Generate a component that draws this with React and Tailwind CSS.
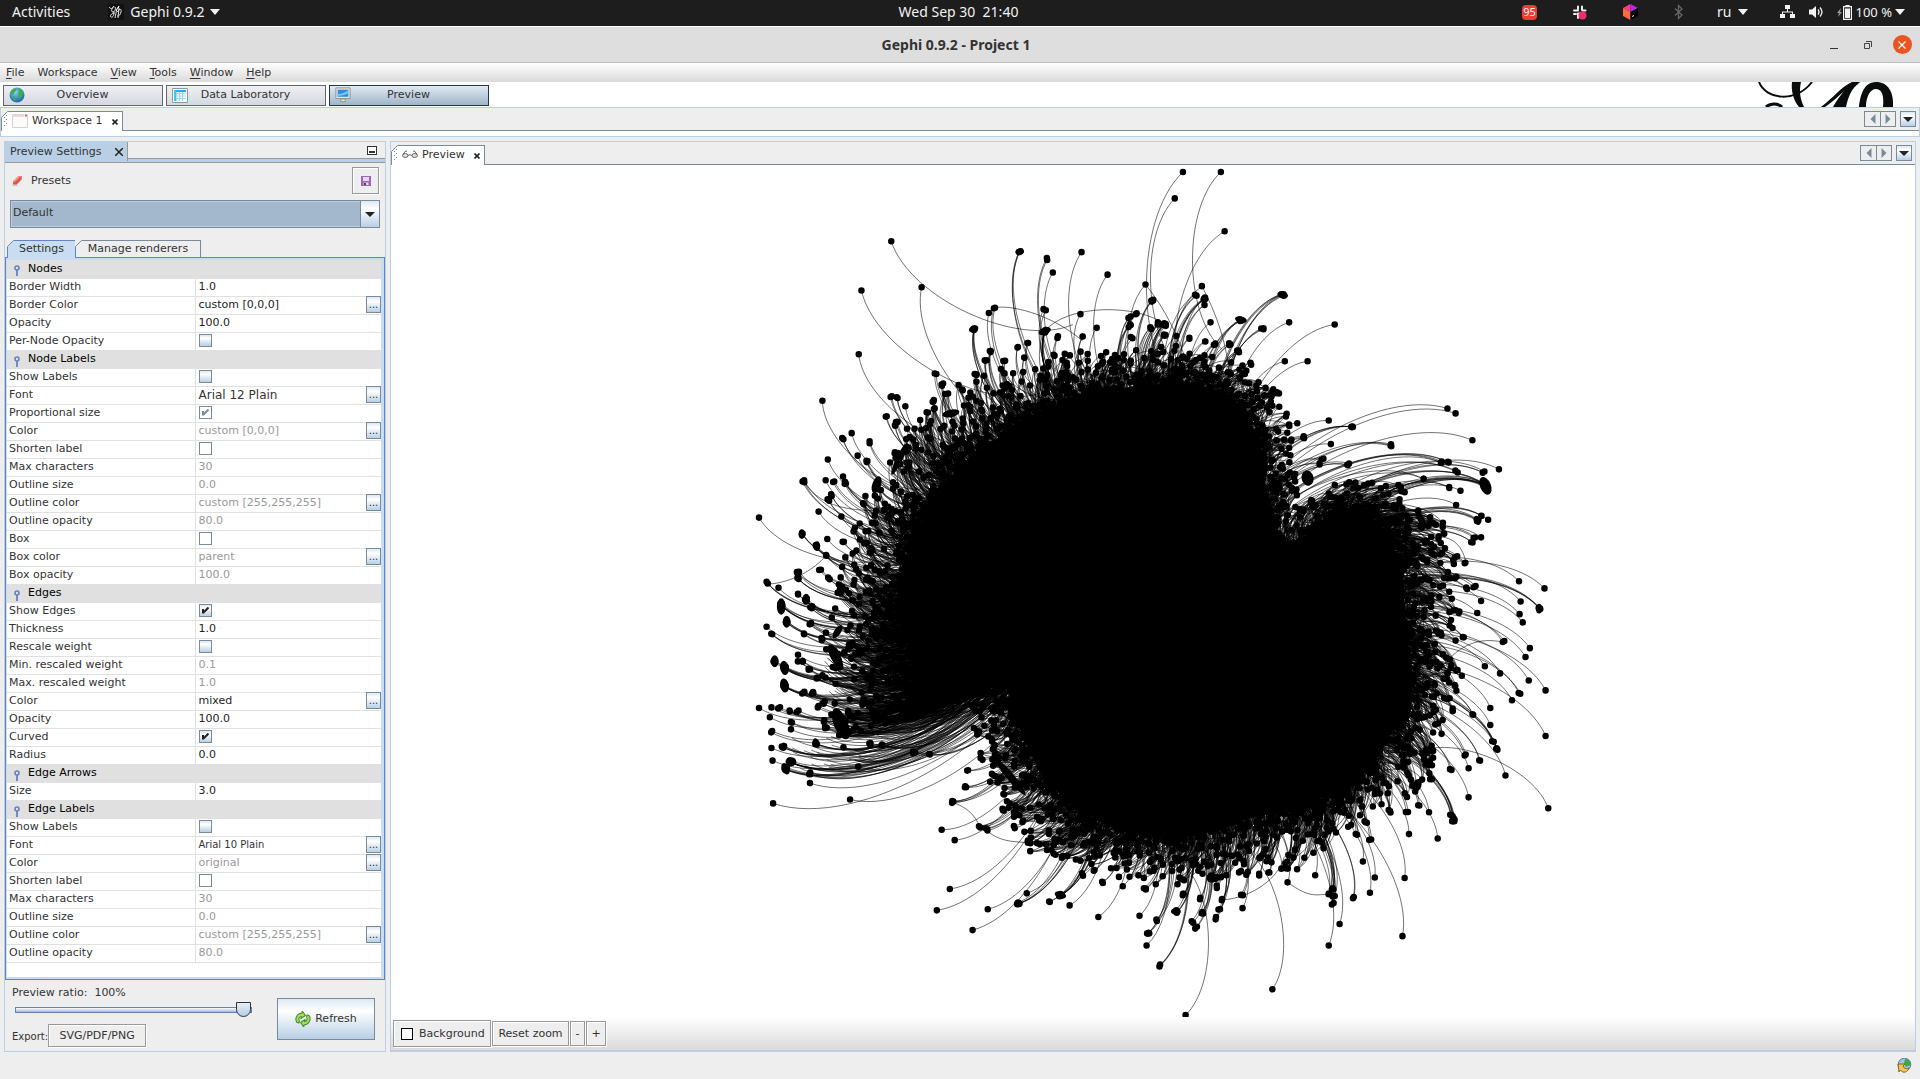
import React from "react";

/* ---------- graph drawing ---------- */

const CENTER = [800, 780];

// Matching outlines: the solid core and the loose rim around it.
const RINGS = [
  [565, 475, 500, 415], [478, 537, 415, 460], [412, 605, 340, 555], [358, 692, 280, 655],
  [342, 780, 250, 760], [348, 855, 235, 870], [380, 900, 240, 960], [410, 918, 275, 1015],
  [445, 925, 360, 995], [495, 935, 470, 965], [535, 965, 485, 1010], [560, 1040, 505, 1090],
  [595, 1115, 545, 1165], [645, 1170, 590, 1235], [720, 1205, 690, 1262], [800, 1230, 800, 1295],
  [880, 1225, 890, 1300], [960, 1200, 970, 1278], [1050, 1175, 1060, 1262], [1140, 1140, 1160, 1205],
  [1205, 1085, 1270, 1130], [1245, 1020, 1310, 1050], [1265, 930, 1340, 945], [1262, 850, 1330, 850],
  [1250, 760, 1325, 760], [1230, 690, 1315, 670], [1185, 655, 1240, 610], [1130, 660, 1150, 605],
  [1070, 700, 1070, 640], [1025, 700, 1050, 620], [1000, 600, 1045, 550], [990, 520, 1030, 480],
  [965, 455, 1000, 420], [912, 425, 940, 375], [850, 418, 860, 362], [760, 418, 750, 358],
  [660, 436, 635, 378],
];

// Outlying nodes: x, y, number of edges, and for long edges the far end
const OUTLIERS = [
  [853, 22, 1, 860, 450], [838, 70, 1, 855, 390], [923, 22, 1, 925, 345], [930, 130, 1, 862, 430], [315, 148, 1, 650, 300],
  [260, 238, 1, 590, 425], [371, 232, 1, 560, 500], [552, 167, 3], [604, 181, 2], [613, 205],
  [666, 168], [714, 209], [784, 227], [888, 230], [797, 256, 3], [876, 246, 3], [892, 252, 6], [892, 266, 2], [1037, 246, 6], [960, 291, 5],
  [1000, 309, 3], [1049, 296], [1133, 300], [1041, 367], [1083, 367], [255, 354, 1, 480, 520], [188, 439, 1, 370, 600], [504, 270, 2], [495, 279], [467, 308, 5],
  [598, 272, 2], [600, 312, 8], [664, 281], [622, 323, 2], [694, 306], [549, 341, 2], [567, 332, 2], [497, 348, 4], [489, 364, 3], [668, 323, 2],
  [559, 362, 2], [615, 355, 2], [523, 368, 2], [470, 391, 4], [396, 389, 2], [409, 410, 3], [445, 419, 2], [393, 440, 4], [316, 433, 2], [327, 433, 2],
  [341, 449], [305, 467, 2], [325, 477, 2], [321, 485, 2], [344, 490], [242, 498], [226, 507, 2], [277, 514, 2], [253, 539], [271, 549, 3],
  [198, 546], [153, 586, 3], [194, 584], [209, 588, 2], [229, 588, 4], [226, 577], [203, 611, 2], [199, 620, 2], [181, 641], [223, 650],
  [71, 652, 1, 350, 710], [150, 682, 3], [178, 704, 3], [197, 691], [194, 722, 2], [227, 695, 2], [143, 752, 3], [143, 763, 3], [183, 747, 2], [200, 763, 2],
  [85, 769], [87, 773, 2], [107, 780], [141, 791, 2], [158, 801, 4], [112, 810, 7], [168, 815, 4], [122, 842, 5], [165, 846, 4], [85, 851],
  [94, 865, 3], [153, 863, 2], [187, 874, 3], [143, 902], [141, 914, 2], [154, 914, 2], [100, 914, 3], [118, 925, 7], [118, 958, 7], [164, 930, 3],
  [178, 946, 3], [153, 971, 3], [170, 971, 3], [71, 999], [94, 998], [109, 998, 2], [126, 1005, 2], [142, 1005, 2], [91, 1016], [131, 1024, 2],
  [130, 1038], [95, 1042, 2], [94, 1072], [115, 1071, 5], [177, 1063, 4], [96, 1095], [130, 1097, 8], [121, 1110, 6], [163, 1118, 3], [165, 1136],
  [97, 1173], [239, 1166], [254, 1106], [228, 1071, 2], [277, 1065, 3], [297, 1066, 3], [357, 1080, 3], [384, 1083, 2], [180, 997, 2], [190, 989, 3],
  [192, 1022, 3], [195, 1034, 3], [408, 1221], [432, 1240], [428, 1171, 4], [478, 1215, 3], [490, 1221, 3], [456, 1113, 2], [452, 1143, 3], [423, 1329],
  [399, 1368], [493, 1366], [465, 1404], [549, 1356, 5], [565, 1337], [627, 1340, 7], [608, 1353, 2], [644, 1359], [697, 1380], [705, 1317, 2],
  [735, 1307], [742, 1324], [689, 1297, 2], [667, 1303, 2], [773, 1378], [803, 1387, 2], [789, 1410, 3], [786, 1432], [810, 1468, 3], [858, 1559, 1, 850, 1280],
  [783, 1330, 3], [840, 1370, 4], [871, 1389, 2], [877, 1399, 2], [888, 1372, 3], [852, 1338, 3], [883, 1346, 2], [914, 1382, 2], [919, 1366, 2], [927, 1348, 2],
  [963, 1364], [962, 1338, 2], [958, 1297, 2], [914, 1325, 2], [904, 1309, 4], [995, 1302, 2], [1010, 1300, 2], [1046, 1317], [1018, 1512, 1, 960, 1250], [1097, 1304],
  [1122, 1339, 3], [1128, 1330, 3], [1131, 1344, 2], [1129, 1357, 2], [1122, 1432], [1142, 1393], [1168, 1345, 2], [1198, 1336], [1207, 1308], [1185, 1279],
  [1258, 1415], [1262, 1309], [1270, 1229], [1323, 1237], [1352, 1205, 5], [1348, 1196, 3], [1307, 1189], [1199, 1240, 2], [1172, 1228, 2], [1190, 1207, 3],
  [1236, 1188, 2], [1266, 1187, 2], [1287, 1177, 2], [1380, 1162], [1380, 1109], [1348, 1112, 2], [1375, 1084, 2], [1399, 1094, 2], [1432, 1075, 4], [1425, 1061, 2],
  [1448, 1122], [1527, 1182, 1, 1285, 1080], [1522, 1050], [1420, 1030], [1387, 1009, 2], [1420, 999], [1460, 985], [1473, 974, 2], [1522, 967], [1491, 949],
  [1438, 936], [1410, 923], [1444, 879, 2], [1485, 906], [1493, 890], [1369, 872, 2], [1480, 843], [1474, 828], [1396, 826], [1403, 804],
  [1476, 805], [1510, 818, 4], [1520, 781], [1473, 768], [1391, 778, 2], [1377, 781, 2], [1375, 733, 2], [1385, 697, 2], [1391, 688, 2], [1403, 688],
  [1406, 650, 2], [1416, 656], [1396, 657, 4], [1357, 629], [1365, 603], [1411, 594, 12], [1436, 564], [1407, 569, 3], [1358, 568, 2], [1331, 552, 3],
  [1343, 552, 2], [1387, 511], [1356, 462], [1341, 453], [1236, 520, 3], [1157, 555, 3], [1165, 486, 4], [1126, 518], [1122, 475], [1064, 480],
  [1050, 484, 2], [1076, 506, 3], [1028, 425, 3], [1015, 427, 3], [1111, 545, 2], [1105, 555, 2], [977, 371, 2], [955, 349, 4], [940, 335, 3], [912, 336, 3],
  [904, 296], [864, 324, 2], [841, 321], [820, 300, 8], [809, 298, 5], [795, 307, 3], [766, 280, 2], [755, 287, 2], [755, 302, 3], [759, 323, 2],
  [892, 330, 2], [820, 320, 5], [1297, 580, 2], [1346, 596, 2], [1356, 760, 2], [1363, 824, 3], [1336, 682, 2], [1327, 688, 2], [1357, 724, 3], [1350, 1003, 2],
  [1359, 932, 2], [1355, 957, 2], [1315, 1076, 2], [1311, 1130, 2], [574, 1247, 2], [568, 1241, 2], [541, 1217, 2], [520, 1184, 3], [482, 1092, 2], [476, 1041, 2],
];

// Tight clusters that read as one stretched mark: x, y, rx, ry, angle
const CLUSTERS = [
  [112, 814, 8, 15, 0], [118, 926, 8, 13, -10], [118, 958, 8, 13, -10], [100, 914, 7, 11, 0], [122, 842, 7, 11, 0],
  [212, 905, 9, 24, -28], [222, 1028, 13, 30, -22], [130, 1097, 10, 8, 0], [120, 1110, 7, 11, -25], [330, 545, 6, 32, 26],
  [288, 592, 8, 16, 20], [535, 1125, 7, 42, -40], [1083, 580, 11, 14, -15], [1411, 594, 10, 17, -24], [1037, 246, 10, 6, 12],
  [960, 291, 11, 6, 12], [598, 312, 12, 6, -20], [467, 308, 9, 6, -20], [627, 1340, 11, 6, 18], [549, 1356, 8, 6, 15],
  [552, 167, 8, 6, -15], [1510, 818, 6, 9, 0], [840, 1370, 9, 6, 0], [789, 1410, 8, 6, 0], [425, 462, 16, 7, -12],
  [216, 860, 6, 14, 35], [150, 682, 6, 9, 0], [178, 704, 6, 9, 0], [143, 756, 6, 11, 0], [158, 801, 7, 10, 0],
  [1352, 1202, 7, 8, 0], [1165, 486, 7, 6, -15], [1396, 657, 6, 9, -25], [1285, 1140, 8, 12, 20], [1292, 655, 6, 18, -28],
  [177, 1063, 6, 9, -25], [797, 256, 7, 6, 0],
];

const ARCS = [
  "M504 270C530 262 610 280 668 330", "M598 312C640 262 770 262 820 300",
  "M784 227C820 270 850 330 866 390", "M888 230C925 300 935 350 940 400", "M428 1171C455 1180 470 1195 478 1215",
  "M87 773C130 772 175 745 194 722", "M153 586C190 640 250 640 330 640", "M490 1221C520 1250 560 1240 574 1247",
  "M1046 1317C1090 1348 1100 1338 1122 1339", "M926 1349C980 1345 1030 1310 1040 1270", "M1309 690C1345 680 1368 700 1375 733",
  "M1320 940C1360 880 1400 870 1444 879",
];

const inside = (x, y) => {
  let hit = false;
  for (let i = 0, j = RINGS.length - 1; i < RINGS.length; j = i++) {
    const [xi, yi] = RINGS[i];
    const [xj, yj] = RINGS[j];
    if (yi > y !== yj > y && x < ((xj - xi) * (y - yi)) / (yj - yi) + xi) hit = !hit;
  }
  return hit;
};

const curve = (x1, y1, x2, y2, b) => {
  const dx = x2 - x1;
  const dy = y2 - y1;
  const f = (v) => v.toFixed(1);
  return `M${f(x1)} ${f(y1)}C${f(x1 + dx * 0.2 - dy * b)} ${f(y1 + dy * 0.2 + dx * b)} ${f(x2 - dx * 0.2 - dy * b)} ${f(y2 - dy * 0.2 + dx * b)} ${f(x2)} ${f(y2)}`;
};

const dot = (x, y) => `M${x.toFixed(1)} ${y.toFixed(1)}h0`;

function buildGraph() {
  let seed = 20200930;
  const rnd = () => {
    seed = (seed * 1664525 + 1013904223) % 4294967296;
    return seed / 4294967296;
  };
  let edges = "";
  let nodes = "";
  OUTLIERS.forEach(([x, y, n = 1, tx, ty]) => {
    if (tx) {
      edges += curve(x, y, tx, ty, 0.22);
      nodes += dot(x, y);
      return;
    }
    const dx = CENTER[0] - x;
    const dy = CENTER[1] - y;
    let t = 0;
    while (t < 0.9 && !inside(x + dx * t, y + dy * t)) t += 0.02;
    t += 0.08;
    for (let k = 0; k < n; k++) {
      const s = n > 1 ? 5 : 0;
      const sx = x + (rnd() - 0.5) * s;
      const sy = y + (rnd() - 0.5) * s;
      const spread = 16 + n * 4;
      edges += curve(sx, sy, x + dx * t + (rnd() - 0.5) * spread, y + dy * t + (rnd() - 0.5) * spread, 0.22);
      nodes += dot(sx, sy);
    }
  });
  const total = RINGS.length;
  for (let i = 0; i < total; i++) {
    const a = RINGS[i];
    const b = RINGS[(i + 1) % total];
    const len = Math.hypot(b[2] - a[2], b[3] - a[3]);
    const depth = Math.hypot(a[0] - a[2], a[1] - a[3]);
    const count = Math.round((len * (depth + 40)) / 160);
    for (let k = 0; k < count; k++) {
      const u = rnd();
      const t = Math.pow(rnd(), 1.9) * 1.4;
      const ix = a[0] + (b[0] - a[0]) * u;
      const iy = a[1] + (b[1] - a[1]) * u;
      const ox = a[2] + (b[2] - a[2]) * u;
      const oy = a[3] + (b[3] - a[3]) * u;
      const x = ix + (ox - ix) * t;
      const y = iy + (oy - iy) * t;
      nodes += dot(x, y);
      for (let m = 0; m < 4; m++) {
        const q = 0.3 + rnd() * 0.4;
        edges += curve(
          x, y,
          ix - (ox - ix) * q + (rnd() - 0.5) * 120,
          iy - (oy - iy) * q + (rnd() - 0.5) * 120,
          0.22
        );
      }
    }
  }
  // Dense sheaf running from the left rim into the notch
  for (let k = 0; k < 130; k++) {
    const y = 850 + rnd() * 200;
    const x = 190 + rnd() * 130;
    edges += curve(x, y, 420 + rnd() * 110, 890 + rnd() * 60 + (y - 850) * 0.1, 0.2);
  }
  for (let k = 0; k < 26; k++) {
    edges += curve(130 + rnd() * 130, 1040 + rnd() * 70, 440 + rnd() * 90, 950 + rnd() * 40, 0.2);
  }
  return { edges, nodes };
}

const GRAPH = buildGraph();
const CORE = RINGS.map(([x, y]) => `${x},${y}`).join(" ");

const Graph = () => (
  <svg className="block h-full w-full" viewBox="391 165 1523 852" role="img" aria-label="Graph preview">
    <g transform="translate(720 160) scale(0.5421 0.5485)">
      <g fill="none" stroke="#000" strokeWidth="1.2" strokeOpacity="0.85">
        <path d={GRAPH.edges} />
        {ARCS.map((d) => <path key={d} d={d} />)}
      </g>
      <polygon points={CORE} stroke="#000" strokeWidth="10" strokeLinejoin="round" />
      <path d={GRAPH.nodes} stroke="#000" strokeWidth="12" strokeLinecap="round" />
      {CLUSTERS.map(([x, y, rx, ry, a]) => (
        <ellipse key={`${x}-${y}`} cx={x} cy={y} rx={rx} ry={ry} transform={`rotate(${a} ${x} ${y})`} />
      ))}
    </g>
  </svg>
);

/* ---------- small icons ---------- */

const Caret = () => (
  <svg className="h-[6px] w-[10px]" viewBox="0 0 10 6"><path d="M0 0h10L5 6z" fill="#f2f2f2" /></svg>
);

const Globe = () => (
  <svg className="size-4" viewBox="0 0 16 16">
    <defs>
      <radialGradient id="sea" cx="0.4" cy="0.3" r="0.8"><stop offset="0" stopColor="#8fd0f5" /><stop offset="0.6" stopColor="#2f86c9" /><stop offset="1" stopColor="#1c5f9e" /></radialGradient>
    </defs>
    <circle cx="8" cy="8" r="7.5" fill="url(#sea)" />
    <path d="M1.5 5C3 2 6 1 8 1.500L7 4 5 5.500 4 8 2 7zM9 2c3 0 5 2 5.500 4L13 9l-2 3-1.500-2L9 7 10 5zM4 9l3 1.500L6 14 4 12z" fill="#3fae49" />
  </svg>
);

const Grid = () => (
  <svg className="h-[15px] w-4" viewBox="0 0 16 15">
    <path d="M.5.5h15v14H.5z" fill="#fff" stroke="#8a9aa0" />
    <path d="M2 2h12v2H2z" fill="#22a9e8" /><path d="M2 2h2.500v11H2z" fill="#3cc4f2" />
    <path d="M5 5.500h9M5 8h9M5 10.500h9M7.500 4v9M10.500 4v9" stroke="#9fd6ea" />
  </svg>
);

const Monitor = () => (
  <svg className="size-4" viewBox="0 0 18 18">
    <path d="M1 1h16v12H1z" fill="#e9e4dd" stroke="#8f8a84" />
    <path d="M3 3h12v8H3z" fill="#2a8fdf" /><path d="M3 8c5 0 8-2 12-4v3c-4 2-8 3-12 3z" fill="#7cc4f4" />
    <path d="M6.500 13.500h5v3h-5z" fill="#e9e4dd" stroke="#8f8a84" />
  </svg>
);

const Sheet = () => (
  <svg className="h-[14px] w-4" viewBox="0 0 16 14">
    <path d="M.5.500h15v13H.5z" fill="#fbfbfb" stroke="#d8d3d0" /><path d="M1 1h11v2H1z" fill="#eadcda" /><path d="M13 1h2v1.500h-2z" fill="#d55" />
  </svg>
);

const Glasses = () => (
  <svg className="h-[9px] w-4" viewBox="0 0 16 9">
    <g fill="#e2e2e2" stroke="#666" strokeWidth="1"><ellipse cx="3.300" cy="5.500" rx="2.700" ry="2" /><ellipse cx="12.700" cy="5.500" rx="2.700" ry="2" /><path d="M6 5.500c1-.8 3-.8 4 0M1 4.500L3 1.500l2-.5M15 4.500l-2-3-2-.5" fill="none" /></g>
  </svg>
);

const CloseMark = () => (
  <svg className="size-[6px]" viewBox="0 0 6 6"><path d="M.5.5l5 5m0-5l-5 5" stroke="#222" strokeWidth="1.600" /></svg>
);

const Grip = () => (
  <svg className="h-3 w-1" viewBox="0 0 4 12"><path d="M0 2h1v1H0zM2 0h1v1H2zM0 6h1v1H0zM2 4h1v1H2zM0 10h1v1H0zM2 8h1v1H2z" fill="#7a8a99" /></svg>
);

// Cut-off corner at the upper left of a tab
const TabShape = () => (
  <svg className="pointer-events-none absolute -left-px -top-px size-[7px]" viewBox="0 0 7 7">
    <path d="M0 0h7L0 7z" fill="#eee" /><path d="M.5 6.500l6-6" stroke="#7a8a99" />
  </svg>
);

const Pin = () => (
  <svg className="h-[11px] w-[6px]" viewBox="0 0 6 11"><circle cx="3" cy="3" r="2" fill="none" stroke="#6382bf" strokeWidth="1.600" /><path d="M3 5v6" stroke="#6382bf" strokeWidth="1.800" /></svg>
);

const Eraser = () => (
  <svg className="h-[10px] w-[11px]" viewBox="0 0 11 10">
    <path d="M0 9.500h6" stroke="#ccc" /><path d="M6 .5L10 .3 9.500 3.500 4.500 8.800.800 8.500 1.500 5z" fill="#e8504a" /><path d="M6 .5L1.500 5l1.500.8L7.500 1.500z" fill="#f79a92" />
  </svg>
);

const Floppy = () => (
  <svg className="size-[10px]" viewBox="0 0 10 10"><path d="M0 0h10v10H0z" fill="#9a68b4" /><path d="M2 1h6v4H2z" fill="#e6d9ee" /><path d="M2.500 6.500h5V9h-5z" fill="#ddd" /><path d="M3 7h2v2H3z" fill="#5f3377" /></svg>
);

const RefreshIcon = () => (
  <svg className="size-4" viewBox="0 0 16 16" strokeLinejoin="round">
    <g fill="#a6d96a" stroke="#3f8a1d" strokeWidth="1" transform="rotate(-35 8 8)">
      <path d="M1 7.500C1 4 4 1 8 1.500l2.500 1L12 1v5.500H6.500L8.300 5C6 4 4.300 5 4 7.500L2.500 9z" />
      <path d="M15 8.500c0 3.500-3 6.500-7 6l-2.500-1L4 15V9.500h5.500L7.700 11c2.300 1 4 0 4.300-2.500L13.500 7z" />
    </g>
  </svg>
);

const GephiMark = () => (
  <svg className="size-4" viewBox="0 0 16 16" fill="none" stroke="#e8e8e8" strokeWidth="1">
    <path d="M0 0h16v16H0z" fill="#111" stroke="none" />
    <path d="M1 3c2 3 4 1 5-1M6 2C3 5 3 8 5 8s3-3 2-5M5 8c2 2 0 6-2 5s1-4 4-4M8 6c2-1 3-3 3-4-3 2-3 9-4 12M9 8c2-3 5-4 4 0s-3 4-4 4M11 4l-1 10" />
  </svg>
);

const GephiScript = () => (
  <svg className="h-[25px] w-[136px] self-end" viewBox="0 0 136 25" aria-label="Gephi">
    <g fill="none" stroke="#0a0c0c">
      <path d="M1 0C8 18 38 21 54 0" strokeWidth="2" />
      <path d="M8 25c5-4 12-4 16 0" strokeWidth="3" />
    </g>
    <path d="M34 0h9c-2 9-1 17 3 25h-5C35 18 33 8 34 0zM102 0c-3 4-9 4-14 25H75C79 18 82 14 86 9 80 15 74 20 67 25h-4C74 17 84 4 94 0zM101 25c1-10 4-25 17-25 12 0 18 10 17 25h-10c1-9 0-18-7-18-6 0-10 8-10 18z" fill="#0a0c0c" />
  </svg>
);

/* ---------- building blocks ---------- */

const steel = "border border-[#7a8a99] bg-linear-to-b from-[#dde8f3] via-white via-30% to-[#b8cfe5]";

const NavButtons = () => (
  <div className="flex pt-[3px] pr-[3px]">
    {["M7 0L1 6l6 6z", "M1 0l6 6-6 6z"].map((d, i) => (
      <button key={d} aria-label={i ? "Scroll right" : "Scroll left"} className={`flex size-4 items-center justify-center border border-[#7a8a99] ${i ? "" : "border-r-0"}`}>
        <svg className="h-[10px] w-2" viewBox="0 0 8 12"><path d={d} fill="#7a8a99" /></svg>
      </button>
    ))}
    <button aria-label="Show opened documents" className={`ml-1 flex size-4 items-center justify-center ${steel}`}>
      <svg className="h-[5px] w-[10px]" viewBox="0 0 10 5"><path d="M0 0h10L5 5z" fill="#222" /></svg>
    </button>
  </div>
);

const DocTab = ({ icon, label, className }) => (
  <div className={`relative mt-[3px] flex items-center border border-b-0 border-[#7a8a99] bg-white pb-[2px] pl-[2px] pr-1 ${className}`}>
    <TabShape />
    <Grip />
    <button className="ml-1 flex items-center gap-1">{icon}<span className="whitespace-nowrap">{label}</span></button>
    <button aria-label={`Close ${label}`} className="ml-auto pt-[2px]"><CloseMark /></button>
  </div>
);

const SETTINGS = [
  ["Nodes", [
    ["Border Width", "1.0"], ["Border Color", "custom [0,0,0]", "dots"], ["Opacity", "100.0"], ["Per-Node Opacity", "", "off"],
  ]],
  ["Node Labels", [
    ["Show Labels", "", "off"], ["Font", "Arial 12 Plain", "dots", "text-[12px]"], ["Proportional size", "", "on-disabled"],
    ["Color", "custom [0,0,0]", "dots", "dim"], ["Shorten label", "", "off-disabled"], ["Max characters", "30", "", "dim"],
    ["Outline size", "0.0", "", "dim"], ["Outline color", "custom [255,255,255]", "dots", "dim"], ["Outline opacity", "80.0", "", "dim"],
    ["Box", "", "off-disabled"], ["Box color", "parent", "dots", "dim"], ["Box opacity", "100.0", "", "dim"],
  ]],
  ["Edges", [
    ["Show Edges", "", "on"], ["Thickness", "1.0"], ["Rescale weight", "", "off"], ["Min. rescaled weight", "0.1", "", "dim"],
    ["Max. rescaled weight", "1.0", "", "dim"], ["Color", "mixed", "dots"], ["Opacity", "100.0"], ["Curved", "", "on"], ["Radius", "0.0"],
  ]],
  ["Edge Arrows", [["Size", "3.0"]]],
  ["Edge Labels", [
    ["Show Labels", "", "off"], ["Font", "Arial 10 Plain", "dots", "text-[10px]"], ["Color", "original", "dots", "dim"],
    ["Shorten label", "", "off-disabled"], ["Max characters", "30", "", "dim"], ["Outline size", "0.0", "", "dim"],
    ["Outline color", "custom [255,255,255]", "dots", "dim"], ["Outline opacity", "80.0", "", "dim"],
  ]],
];

const Tick = ({ label, kind }) => {
  const on = kind.startsWith("on");
  const disabled = kind.endsWith("disabled");
  return (
    <span className="relative block size-[13px]">
      <input
        type="checkbox"
        aria-label={label}
        defaultChecked={on}
        disabled={disabled}
        className={`block size-[13px] appearance-none border border-[#7a8a99] ${disabled ? "bg-white" : "bg-linear-to-b from-[#dde8f3] via-white via-30% to-[#b8cfe5]"}`}
      />
      {on && (
        <svg className="pointer-events-none absolute left-[3px] top-[3px] size-[7px]" viewBox="0 0 7 7">
          <path d="M1 2v4.500M1 6L6.500.5" fill="none" stroke={disabled ? "#7a8a99" : "#222"} strokeWidth="2" />
        </svg>
      )}
    </span>
  );
};

const Row = ({ label, value, kind = "", tone = "" }) => (
  <tr className="h-[18px] border-b border-[#e0e0e0]">
    <th scope="row" className="border-r border-[#e0e0e0] p-0 pl-[2px] text-left font-normal">{label}</th>
    <td className="p-0">
      <div className="flex h-[17px] items-center pb-px pl-[3px]">
        {kind.startsWith("o") ? <Tick label={label} kind={kind} /> : (
          <span className={tone === "dim" ? "text-[#999]" : tone || "text-[#222]"}>{value}</span>
        )}
        {kind === "dots" && (
          <button aria-label={`Edit ${label}`} className={`ml-auto h-[17px] w-[15px] text-[10px] leading-[14px] ${steel}`}>...</button>
        )}
      </div>
    </td>
  </tr>
);

const plainButton = "border border-[#999] bg-[#eee] shadow-[inset_1px_1px_0_#fff,1px_1px_0_#fff]";

/* ---------- page ---------- */

function TopBar() {
  return (
    <header className="grid h-[26px] shrink-0 grid-cols-3 items-center bg-[#1d1d1d] pb-[2px] pl-3 pr-[15px] font-['Noto_Sans','Open_Sans',sans-serif] text-[14px] leading-5 text-[#f2f2f2]">
      <div className="flex items-center">
        <button>Activities</button>
        <button className="ml-[38px] flex items-center gap-[6px]"><GephiMark /><span>Gephi 0.9.2</span><Caret /></button>
      </div>
      <button className="justify-self-center whitespace-pre">Wed Sep 30  21:40</button>
      <div className="flex items-center justify-end">
        <span className="mr-[36px] flex h-[15px] w-[15px] items-center justify-center rounded-[4px] bg-[#f23a35] text-[11px] leading-3">95</span>
        <svg className="mr-[35px] size-[15px]" viewBox="0 0 15 15">
          <g stroke="#eee" strokeWidth="2" strokeLinecap="round"><path d="M5 4V1.500M1 5.500h4M9 1.500V5M9.500 5.500h3M1 9h2M5 9v4M5 8.500h2" /></g>
          <circle cx="9.500" cy="10.500" r="4" fill="#f02d6d" />
        </svg>
        <svg className="mr-[36px] h-4 w-[15px]" viewBox="0 0 15 16">
          <path d="M0 4L7.500 0v8z" fill="#fb3a8c" /><path d="M7.500 0L15 4 7.500 8z" fill="#b22be0" /><path d="M0 4l7.500 4v8L0 12z" fill="#ff6a45" /><path d="M7.500 8L15 4v8l-7.500 4z" fill="#000" /><path d="M9 12.500l2-1" stroke="#fff" />
        </svg>
        <svg className="mr-[34px] h-4 w-[9px]" viewBox="0 0 9 16"><path d="M1 4.500l7 6.500-3.500 3.500v-13L8 5 1 11.500" fill="none" stroke="#666" strokeWidth="1.300" /></svg>
        <button className="mr-[32px] flex items-center gap-[6px]"><span>ru</span><Caret /></button>
        <svg className="mr-[14px] h-[14px] w-[15px]" viewBox="0 0 15 14"><path d="M5 0h5v4H5zM0 9h5v4H0zM10 9h5v4h-5zM7 4h1v3H7zM2 6.500h11v1H2zM2 7h1v2H2zM12 7h1v2h-1z" fill="#f2f2f2" /></svg>
        <svg className="mr-[13px] h-[14px] w-[15px]" viewBox="0 0 15 14"><path d="M0 4.500h3L7 1v12L3 9.500H0z" fill="#f2f2f2" /><path d="M9 4.500q2 2.500 0 5M11 2.500q4 4.500 0 9" fill="none" stroke="#f2f2f2" strokeWidth="1.300" /></svg>
        <svg className="mr-1 h-[15px] w-[15px]" viewBox="0 0 15 15"><path d="M4 3L0 8h2l-1 4 4-5H3z" fill="#999" /><path d="M6.600 1.600h7.800v12.800H6.600zM9 0h3v1H9z" fill="none" stroke="#f2f2f2" strokeWidth="1.200" /><path d="M8 3.500h5v9.500H8z" fill="#f2f2f2" /></svg>
        <button className="flex items-center gap-[3px] whitespace-nowrap text-[13px]"><span>100 %</span><Caret /></button>
      </div>
    </header>
  );
}

function PreviewSettings() {
  return (
    <section className="flex w-[382px] shrink-0 flex-col border border-[#b8cfe5]">
      <div className="flex h-[21px] shrink-0 items-start border-b border-[#999] bg-[#b8cfe5] pb-[2px]">
        <div className="flex h-[19px] w-[123px] items-center justify-between border-r border-[#999] pl-[5px] pr-1">
          <span className="whitespace-nowrap">Preview Settings</span>
          <button aria-label="Close Preview Settings"><svg className="size-2" viewBox="0 0 8 8"><path d="M0 0l8 8M8 0L0 8" stroke="#222" strokeWidth="1.500" /></svg></button>
        </div>
        <div className="flex h-[17px] flex-1 items-center justify-end border-b border-[#999] bg-[#eee] pr-2">
          <button aria-label="Minimize" className="flex h-[9px] w-[10px] items-end border border-[#333] bg-white px-px pb-px"><span className="h-[2px] w-full bg-[#333]" /></button>
        </div>
      </div>
      <div className="flex items-center pl-[7px] pr-[6px] pt-1">
        <Eraser />
        <label htmlFor="preset" className="ml-2">Presets</label>
        <button aria-label="Save preset" className={`ml-auto flex size-[27px] items-center justify-center ${plainButton}`}><Floppy /></button>
      </div>
      <div className="relative mx-[5px] mt-[6px] h-7 shrink-0">
        <select id="preset" className="h-7 w-full appearance-none border border-[#7a8a99] bg-[#a3b8cc] pl-[2px] pb-[3px] text-[#333] shadow-[inset_0_0_0_1px_#b8cfe5]"><option>Default</option></select>
        <span className={`pointer-events-none absolute right-0 top-0 flex h-7 w-5 items-center justify-center ${steel}`}>
          <svg className="h-[5px] w-[10px]" viewBox="0 0 10 5"><path d="M0 0h10L5 5z" fill="#222" /></svg>
        </span>
      </div>
      <div className="mt-3 flex h-[17px] shrink-0 pl-[2px]">
        <button className="relative h-[18px] w-[69px] border border-b-0 border-[#6382bf] bg-[#c8ddf2] pb-px leading-4"><TabShape />Settings</button>
        <button className="relative h-[17px] w-[125px] border border-b-0 border-l-0 border-[#7a8a99] pb-px leading-[14px]"><TabShape />Manage renderers</button>
      </div>
      <div className="flex-1 border border-[#6382bf] bg-white">
        <div className="h-full border-2 border-l border-r-[3px] border-[#c8ddf2]">
          <table className="w-full table-fixed border-collapse">
            <colgroup><col className="w-[188px]" /><col /></colgroup>
            {SETTINGS.map(([group, rows]) => (
              <tbody key={group}>
                <tr className="h-[18px] border-b border-[#e0e0e0] bg-[#e0e0e0]">
                  <th colSpan={2} className="p-0 text-left font-normal text-black">
                    <button className="flex h-[17px] items-center gap-2 pl-[7px]"><span className="pt-1"><Pin /></span>{group}</button>
                  </th>
                </tr>
                {rows.map(([label, value, kind, tone]) => <Row key={label} label={label} value={value} kind={kind} tone={tone} />)}
              </tbody>
            ))}
          </table>
        </div>
      </div>
      <div className="flex h-[71px] shrink-0 justify-between pl-[7px] pr-[10px]">
        <div>
          <label htmlFor="ratio" className="block pt-[5px] leading-4">Preview ratio:&nbsp; 100%</label>
          <input
            id="ratio" type="range" defaultValue="100"
            className="ml-[3px] mt-px block h-[16px] w-[237px] appearance-none bg-transparent [&::-webkit-slider-runnable-track]:h-[6px] [&::-webkit-slider-runnable-track]:border [&::-webkit-slider-runnable-track]:border-[#6382bf] [&::-webkit-slider-runnable-track]:bg-linear-to-b [&::-webkit-slider-runnable-track]:from-white [&::-webkit-slider-runnable-track]:to-[#a3b8cc] [&::-webkit-slider-thumb]:mt-[-6px] [&::-webkit-slider-thumb]:h-[15px] [&::-webkit-slider-thumb]:w-[15px] [&::-webkit-slider-thumb]:appearance-none [&::-webkit-slider-thumb]:bg-linear-to-b [&::-webkit-slider-thumb]:from-[#e4edf6] [&::-webkit-slider-thumb]:to-[#b8cfe5] [&::-webkit-slider-thumb]:border [&::-webkit-slider-thumb]:border-[#333] [&::-webkit-slider-thumb]:rounded-b-full"
          />
          <div className="flex items-end pt-[6px]">
            <span className="pb-1 text-[10px] leading-3">Export:</span>
            <button className={`h-[23px] w-[98px] ${plainButton}`}>SVG/PDF/PNG</button>
          </div>
        </div>
        <button className={`mt-[18px] flex h-[42px] w-[98px] items-center justify-center gap-1 ${steel}`}><RefreshIcon />Refresh</button>
      </div>
    </section>
  );
}

function PreviewPane() {
  return (
    <section className="flex min-w-0 flex-1 flex-col border border-[#b8cfe5] bg-white">
      <div className="flex h-[23px] shrink-0 justify-between border-b border-[#7a8a99] bg-[#eee]">
        <DocTab icon={<Glasses />} label="Preview" className="h-5 w-[94px]" />
        <NavButtons />
      </div>
      <div className="min-h-0 flex-1"><Graph /></div>
      <div className="flex h-[34px] shrink-0 items-center gap-px border-b border-[#c3cbd6] bg-linear-to-b from-white to-[#dadada] pl-[2px]">
        <button className={`flex h-[27px] w-[98px] items-center gap-[6px] pl-[7px] ${plainButton}`}><span className="size-3 border border-black bg-white" />Background</button>
        <button className={`h-[25px] w-[77px] whitespace-nowrap ${plainButton}`}>Reset zoom</button>
        <button className={`h-[25px] w-[15px] ${plainButton}`}>-</button>
        <button className={`h-[25px] w-5 ${plainButton}`}>+</button>
      </div>
    </section>
  );
}

export default function App() {
  return (
    <div className="flex h-screen flex-col bg-[#eee] font-['DejaVu_Sans',sans-serif] text-[11px] leading-[14px] text-[#333]">
      <TopBar />
      <div className="grid h-[37px] shrink-0 grid-cols-3 items-center border-b border-t border-b-[#bdbdbd] border-t-white bg-[#dedede] pr-2">
        <span />
        <h1 className="justify-self-center font-['Noto_Sans','Open_Sans',sans-serif] text-[14px] font-bold leading-5">Gephi 0.9.2 - Project 1</h1>
        <div className="flex items-center justify-end">
          <button aria-label="Minimize window" className="mr-[26px] h-2 w-2 border-b border-[#333]" />
          <button aria-label="Restore window" className="mr-[21px]"><svg className="size-2" viewBox="0 0 8 8"><path d="M2 .5h5.500V6M.5 2.500h5v5h-5z" fill="none" stroke="#444" /></svg></button>
          <button aria-label="Close window" className="flex size-[19px] items-center justify-center rounded-full bg-[#e95420]"><svg className="size-2" viewBox="0 0 8 8"><path d="M.5.5l7 7m0-7l-7 7" stroke="#fff" strokeWidth="1.200" /></svg></button>
        </div>
      </div>
      <nav className="flex h-[19px] shrink-0 items-center gap-[13px] bg-linear-to-b from-white to-[#dadada] pl-[6px]">
        {["File", "Workspace", "View", "Tools", "Window", "Help"].map((m) => (
          <button key={m}>{m === "Workspace" ? m : <><span className="underline underline-offset-2">{m[0]}</span>{m.slice(1)}</>}</button>
        ))}
      </nav>
      <div className="flex h-[25px] shrink-0 items-center justify-between bg-white pl-[3px] pr-[26px]">
        <div className="flex gap-[3px] pt-px">
          {[["Overview", <Globe key="i" />], ["Data Laboratory", <Grid key="i" />], ["Preview", <Monitor key="i" />]].map(([label, icon]) => (
            <button key={label} className={`flex h-[21px] w-[160px] items-center border pl-[5px] ${label === "Preview" ? "border-[#263645] bg-linear-to-b from-[#e1eaf2] to-[#9fb5ca]" : "border-[#63666e] bg-linear-to-b from-[#eff0f4] to-[#d5d8e0]"}`}>
              {icon}<span className="flex-1 pr-[22px] text-center">{label}</span>
            </button>
          ))}
        </div>
        <GephiScript />
      </div>
      <div className="h-[30px] shrink-0 border border-[#b8cfe5] bg-white">
        <div className="flex h-[23px] justify-between border-b border-[#7a8a99] bg-[#eee]">
          <DocTab icon={<Sheet />} label="Workspace 1" className="h-5 w-[122px]" />
          <NavButtons />
        </div>
      </div>
      <main className="flex min-h-0 flex-1 gap-1 pl-1 pr-[4px] pt-1">
        <PreviewSettings />
        <PreviewPane />
      </main>
      <footer className="flex h-[27px] shrink-0 items-center justify-end pr-2">
        <button aria-label="Check for updates">
          <svg className="size-[15px]" viewBox="0 0 15 15"><circle cx="7.500" cy="6.500" r="6.300" fill="#9cc8e6" stroke="#557a94" /><path d="M8 1c4 0 5.500 3 5.500 6L9 9 7 5z" fill="#3fa845" /><path d="M1 6h7L6 8c1 3 4 3 6 2-1 4-6 6-8.500 2L2 14z" fill="#f0c75a" stroke="#8a6414" /></svg>
        </button>
      </footer>
    </div>
  );
}
